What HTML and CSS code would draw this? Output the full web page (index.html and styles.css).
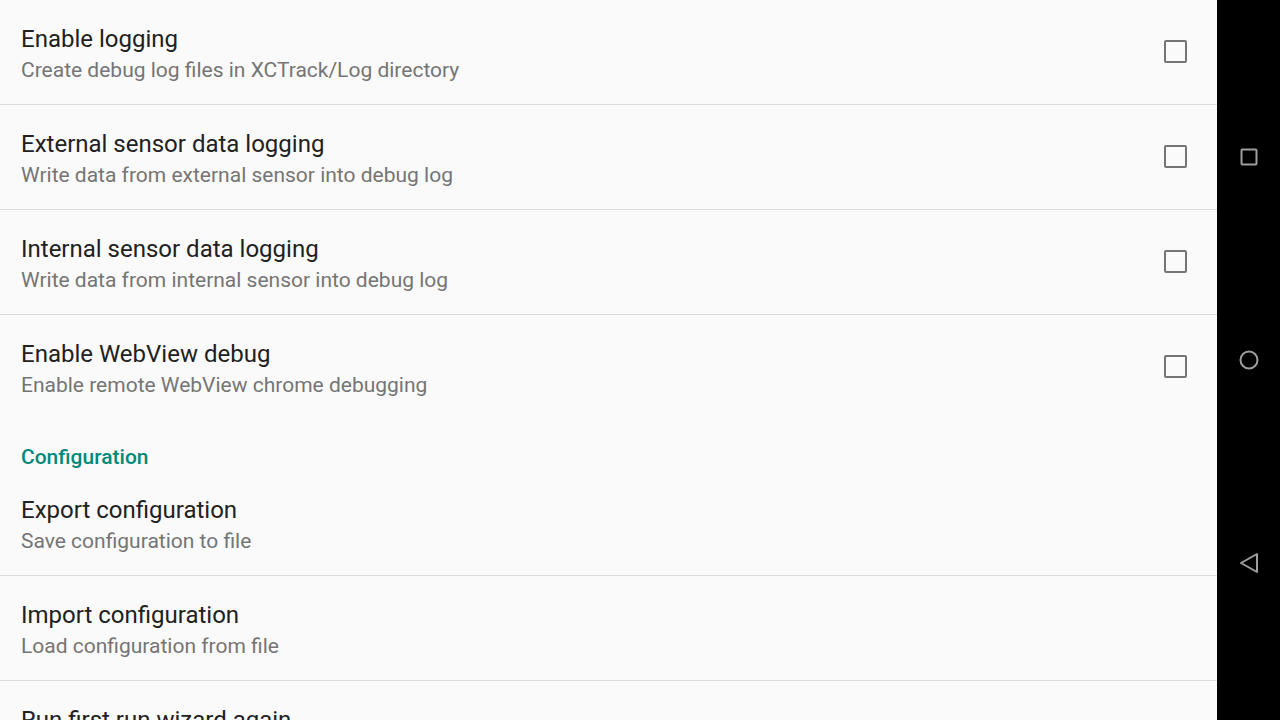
FILE: index.html
```html
<!DOCTYPE html>
<html lang="en">
<head>
<meta charset="UTF-8">
<meta name="viewport" content="width=device-width, initial-scale=1">
<title>XCTrack - Preferences</title>
<link rel="stylesheet" href="styles.css">
</head>
<body>
<div class="screen">
    <div class="pref-list">
        <div class="pref">
            <div class="pref-text">
                <div class="pref-title">Enable logging</div>
                <div class="pref-summary">Create debug log files in XCTrack/Log directory</div>
            </div>
            <div class="checkbox"></div>
        </div>
        <div class="pref">
            <div class="pref-text">
                <div class="pref-title">External sensor data logging</div>
                <div class="pref-summary">Write data from external sensor into debug log</div>
            </div>
            <div class="checkbox"></div>
        </div>
        <div class="pref">
            <div class="pref-text">
                <div class="pref-title">Internal sensor data logging</div>
                <div class="pref-summary">Write data from internal sensor into debug log</div>
            </div>
            <div class="checkbox"></div>
        </div>
        <div class="pref last">
            <div class="pref-text">
                <div class="pref-title">Enable WebView debug</div>
                <div class="pref-summary">Enable remote WebView chrome debugging</div>
            </div>
            <div class="checkbox"></div>
        </div>

        <div class="category">Configuration</div>

        <div class="pref">
            <div class="pref-text">
                <div class="pref-title">Export configuration</div>
                <div class="pref-summary">Save configuration to file</div>
            </div>
        </div>
        <div class="pref">
            <div class="pref-text">
                <div class="pref-title">Import configuration</div>
                <div class="pref-summary">Load configuration from file</div>
            </div>
        </div>
        <div class="pref">
            <div class="pref-text">
                <div class="pref-title">Run first run wizard again</div>
                <div class="pref-summary">Show the setup wizard</div>
            </div>
        </div>
    </div>

    <div class="nav-bar">
        <div class="nav-btn">
            <svg width="20" height="20" viewBox="0 0 20 20"><rect x="2.5" y="2.5" width="15" height="15" rx="1" fill="none" stroke="#9e9e9e" stroke-width="2"/></svg>
        </div>
        <div class="nav-btn">
            <svg width="22" height="22" viewBox="0 0 22 22"><circle cx="11" cy="11" r="8.5" fill="none" stroke="#9e9e9e" stroke-width="2"/></svg>
        </div>
        <div class="nav-btn">
            <svg width="22" height="24" viewBox="0 0 22 24"><path d="M3 12 L19 3 L19 21 Z" fill="none" stroke="#9e9e9e" stroke-width="2" stroke-linejoin="round"/></svg>
        </div>
    </div>
</div>
</body>
</html>
```

FILE: styles.css
```css
:root {
    --bg: #fafafa;
    --divider: #dcdcdc;
    --accent: #00897b;
}

html, body {
    margin: 0;
    height: 100%;
}

body {
    font-family: Roboto, 'Noto Sans', sans-serif;
    background: #000;
    overflow: hidden;
}

.screen {
    display: flex;
    height: 720px;
}

.pref-list {
    flex: 1;
    background: var(--bg);
    overflow: hidden;
}

/* one preference row: 104px content + 1px divider */
.pref {
    display: flex;
    align-items: center;
    height: 105px;
    box-sizing: border-box;
    padding: 0 30px 0 21px;
    border-bottom: 1px solid var(--divider);
}

.pref.last {
    height: 104px;
    border-bottom: none;
}

.pref-text {
    flex: 1;
    align-self: flex-start;
    padding-top: 23px;
}

.pref-title {
    font-size: 24px;
    line-height: 32px;
    color: #212121;
}

.pref-summary {
    font-size: 21px;
    line-height: 28px;
    margin-top: 1px;
    color: #757575;
}

.checkbox {
    width: 19px;
    height: 19px;
    margin-bottom: 2px;
    border: 2.5px solid #757575;
    border-radius: 2px;
}

.category {
    height: 52px;
    box-sizing: border-box;
    padding: 26px 21px 0;
    font-size: 21px;
    line-height: 24px;
    font-weight: 500;
    color: var(--accent);
}

.nav-bar {
    width: 63px;
    background: #000;
    display: flex;
    flex-direction: column;
    justify-content: center;
    align-items: center;
    gap: 179px;
}

.nav-btn {
    width: 63px;
    height: 24px;
    display: flex;
    align-items: center;
    justify-content: center;
}
```
